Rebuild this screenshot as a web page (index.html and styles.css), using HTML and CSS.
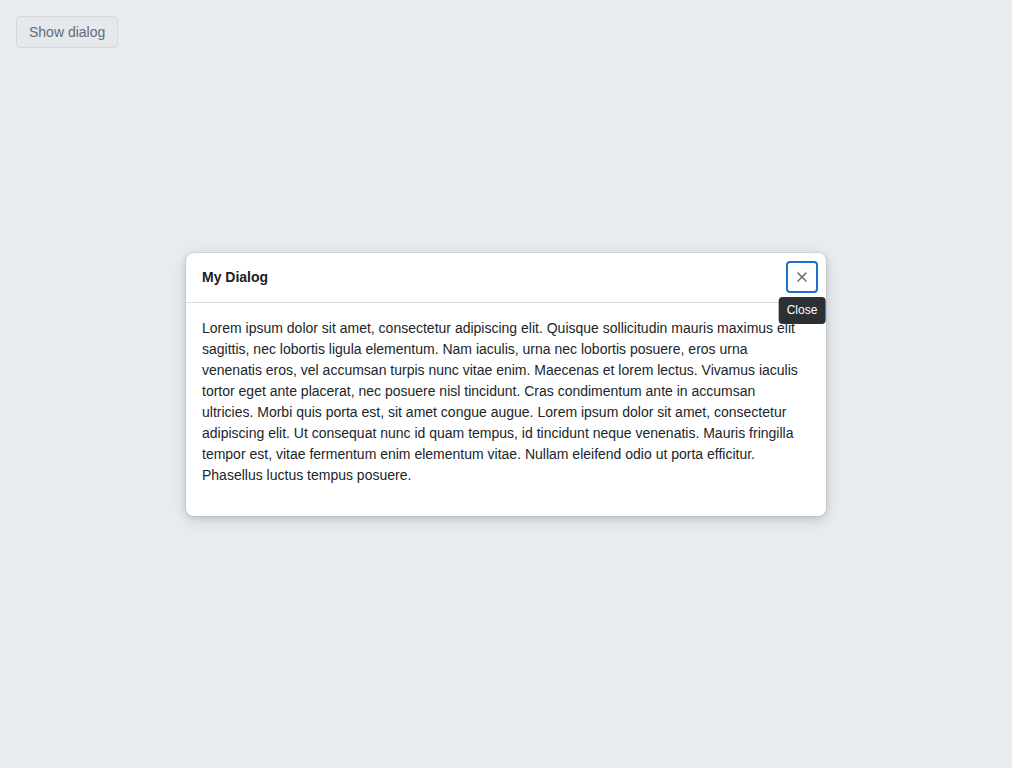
FILE: index.html
```html
<!DOCTYPE html>
<html>
<head>
<meta charset="utf-8">
<link rel="stylesheet" href="styles.css">
</head>
<body>
<div class="page">
  <div class="toolbar">
    <button class="show-btn">Show dialog</button>
  </div>
  <div class="overlay">
    <div class="dialog">
      <div class="dialog-header">
        <h2 class="dialog-title">My Dialog</h2>
        <div class="close-wrap">
          <button class="close-btn" aria-label="Close">
            <svg width="16" height="16" viewBox="0 0 16 16"><path d="M4 4 L12 12 M12 4 L4 12" stroke="#5f6b7c" stroke-width="1.5" stroke-linecap="round" fill="none"/></svg>
          </button>
          <div class="tooltip">Close</div>
        </div>
      </div>
      <div class="dialog-body">
        <p>Lorem ipsum dolor sit amet, consectetur adipiscing elit. Quisque sollicitudin mauris maximus elit sagittis, nec lobortis ligula elementum. Nam iaculis, urna nec lobortis posuere, eros urna venenatis eros, vel accumsan turpis nunc vitae enim. Maecenas et lorem lectus. Vivamus iaculis tortor eget ante placerat, nec posuere nisl tincidunt. Cras condimentum ante in accumsan ultricies. Morbi quis porta est, sit amet congue augue. Lorem ipsum dolor sit amet, consectetur adipiscing elit. Ut consequat nunc id quam tempus, id tincidunt neque venenatis. Mauris fringilla tempor est, vitae fermentum enim elementum vitae. Nullam eleifend odio ut porta efficitur. Phasellus luctus tempus posuere.</p>
      </div>
    </div>
  </div>
</div>
</body>
</html>
```

FILE: styles.css
```css
html, body {
  margin: 0;
  padding: 0;
  height: 100%;
}
body {
  background: #e8ecef;
  font-family: "Liberation Sans", Arial, sans-serif;
  font-size: 14px;
  color: #1c2127;
}
.page {
  position: relative;
  height: 100%;
}
.toolbar {
  padding: 16px;
}
.show-btn {
  height: 32px;
  padding: 0 12px;
  font-family: inherit;
  font-size: 14px;
  color: #5f6b7c;
  background: #e5e9ec;
  border: 1px solid #d3d9de;
  border-radius: 4px;
}
.overlay {
  position: absolute;
  inset: 0;
  display: flex;
  align-items: center;
  justify-content: center;
}
.dialog {
  width: 640px;
  background: #fff;
  border-radius: 8px;
  box-shadow: 0 0 0 1px rgba(17, 20, 24, 0.05), 0 2px 6px rgba(17, 20, 24, 0.12), 0 4px 16px rgba(17, 20, 24, 0.12);
}
.dialog-header {
  display: flex;
  align-items: center;
  justify-content: space-between;
  height: 49px;
  padding: 0 8px 0 16px;
  border-bottom: 1px solid #d3dce3;
}
.dialog-title {
  margin: 0;
  font-size: 14px;
  font-weight: bold;
  color: #1c2127;
}
.close-wrap {
  position: relative;
}
.close-btn {
  width: 32px;
  height: 32px;
  padding: 0;
  display: flex;
  align-items: center;
  justify-content: center;
  background: #fff;
  border: 2px solid #1f6fd1;
  border-radius: 4px;
}
.tooltip {
  position: absolute;
  top: 36px;
  left: 50%;
  transform: translateX(-50%);
  background: #2b3035;
  color: #fff;
  font-size: 12px;
  line-height: 15px;
  padding: 6px 8px;
  border-radius: 4px;
  white-space: nowrap;
}
.dialog-body {
  padding: 15px 16px 30px;
}
.dialog-body p {
  margin: 0;
  line-height: 21px;
  color: #212529;
}
```
